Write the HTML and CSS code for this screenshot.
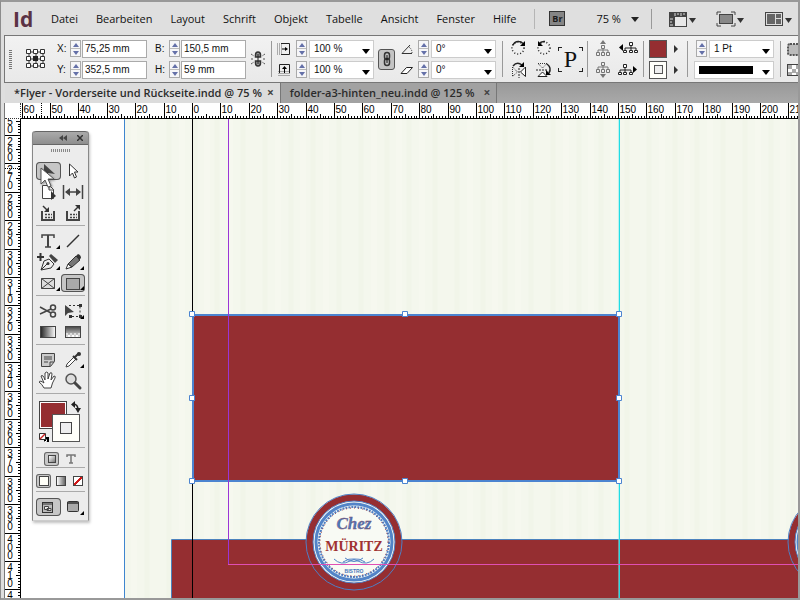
FILE: index.html
```html
<!DOCTYPE html>
<html lang="de">
<head>
<meta charset="utf-8">
<title>Flyer</title>
<link rel="stylesheet" href="styles.css">
</head>
<body>
<header class="menubar">
  <strong class="app-mark">Id</strong>
  <nav class="menus">
    <button>Datei</button><button>Bearbeiten</button><button>Layout</button><button>Schrift</button><button>Objekt</button><button>Tabelle</button><button>Ansicht</button><button>Fenster</button><button>Hilfe</button>
  </nav>
  <i class="rule"></i>
  <button class="bridge">Br</button>
  <label class="zoom"><select aria-label="Zoom"><option>75 %</option></select></label>
  <i class="rule tall"></i>
  <div class="views">
    <button aria-label="Anzeigeoptionen"><svg width="28" height="18"><rect x="1.500" y="2.500" width="17" height="14" fill="#e8e8e8" stroke="#444"/><path d="M1 2h18v5H7v10H1z" fill="#444"/><path d="M7 3v3M10 3v2M13 3v3M16 3v2M2 9h3M2 12h2M2 15h3" stroke="#ddd"/><path d="M21 8h7l-3.500 5z" fill="#333"/></svg></button>
    <button aria-label="Bildschirmmodus"><svg width="28" height="18"><rect x="3.500" y="4.500" width="13" height="9" fill="#888" stroke="#444"/><path d="M1 5V2h4M15 2h4v3M19 13v3h-4M5 16H1v-3" fill="none" stroke="#444"/><path d="M21 8h7l-3.500 5z" fill="#333"/></svg></button>
    <button aria-label="Dokumente anordnen"><svg width="28" height="18"><rect x="1.500" y="2.500" width="17" height="13" fill="#ddd" stroke="#444"/><path d="M3 4h8v10H3zM12 4h5v4h-5zM12 9h5v5h-5z" fill="#666"/><path d="M21 8h7l-3.500 5z" fill="#333"/></svg></button>
  </div>
</header>

<section class="control">
  <i class="grip"></i>
  <svg class="refpoint" width="20" height="20"><path d="M3 3h14v14H3zM3 10h14M10 3v14" fill="none" stroke="#333"/><g fill="#fff" stroke="#333"><path d="M.5.500h4v4h-4zM7.500.500h4v4h-4zM14.500.500h4v4h-4zM.5 7.500h4v4h-4zM14.500 7.500h4v4h-4zM.5 14.500h4v4h-4zM7.500 14.500h4v4h-4zM14.500 14.500h4v4h-4z"/></g><path d="M7 7h5v5H7z" fill="#222"/></svg>
  <div class="rows pos">
    <div class="row"><label for="fx">X:</label><span class="spin"><button aria-label="X erhöhen"></button><button aria-label="X verringern"></button></span><input id="fx" value="75,25 mm"></div>
    <div class="row"><label for="fy">Y:</label><span class="spin"><button aria-label="Y erhöhen"></button><button aria-label="Y verringern"></button></span><input id="fy" value="352,5 mm"></div>
  </div>
  <div class="rows size">
    <div class="row"><label for="fb">B:</label><span class="spin"><button aria-label="B erhöhen"></button><button aria-label="B verringern"></button></span><input id="fb" value="150,5 mm"></div>
    <div class="row"><label for="fh">H:</label><span class="spin"><button aria-label="H erhöhen"></button><button aria-label="H verringern"></button></span><input id="fh" value="59 mm"></div>
  </div>
  <svg class="unlinked" width="14" height="16"><path d="M4.500 6V4q0-3 2.500-3t2.500 3v2zM4.500 10v2q0 3 2.500 3t2.500-3v-2z" fill="#999" stroke="#333" stroke-width="1.500"/><path d="M7 3v10" stroke="#222"/><path d="M0 3l3 2M0 8h3M0 13l3-2M14 3l-3 2M14 8h-3M14 13l-3-2" stroke="#555" stroke-dasharray="2 1"/></svg>
  <i class="rule"></i>
  <div class="rows scale">
    <div class="row"><svg width="16" height="16"><path d="M1 3h6M1 5h6M1 7h6M1 9h6M1 11h6M1 13h6" stroke="#666" stroke-dasharray="1 1"/><path d="M5 2.500h8.500v11H5" fill="none" stroke="#222"/><path d="M6 8h4" stroke="#000"/><path d="M9 6l3 2-3 2z"/></svg><span class="spin"><button aria-label="X-Skalierung erhöhen"></button><button aria-label="X-Skalierung verringern"></button></span><span class="pick"><select aria-label="X-Skalierung"><option>100 %</option></select></span></div>
    <div class="row"><svg width="16" height="16"><path d="M3 9v6M5 9v6M7 9v6M9 9v6M11 9v6M13 9v6" stroke="#666" stroke-dasharray="1 1"/><path d="M3.500 11V2.500h10V11" fill="none" stroke="#222"/><path d="M8.500 6v5" stroke="#000"/><path d="M6 7l2.500-3L11 7z"/></svg><span class="spin"><button aria-label="Y-Skalierung erhöhen"></button><button aria-label="Y-Skalierung verringern"></button></span><span class="pick"><select aria-label="Y-Skalierung"><option>100 %</option></select></span></div>
  </div>
  <button class="chain" aria-label="Proportionen beibehalten"><svg width="10" height="16"><rect x="2.500" y="1.500" width="5" height="7" rx="2.500" fill="none" stroke="#333" stroke-width="1.500"/><rect x="2.500" y="7.500" width="5" height="7" rx="2.500" fill="none" stroke="#333" stroke-width="1.500"/><path d="M5 4v8" stroke="#111"/></svg></button>
  <div class="rows angle">
    <div class="row"><svg width="14" height="14"><path d="M10 3L2 11.500h10" fill="none" stroke="#333"/><path d="M9 5q3 2 3 6" fill="none" stroke="#333" stroke-dasharray="1 1"/></svg><span class="spin"><button aria-label="Drehwinkel erhöhen"></button><button aria-label="Drehwinkel verringern"></button></span><span class="pick"><select aria-label="Drehwinkel"><option>0°</option></select></span></div>
    <div class="row"><svg width="14" height="14"><path d="M6.500 4.500h6L7 10.500H1z" fill="#fff" stroke="#222"/></svg><span class="spin"><button aria-label="Scherwinkel erhöhen"></button><button aria-label="Scherwinkel verringern"></button></span><span class="pick"><select aria-label="Scherwinkel"><option>0°</option></select></span></div>
  </div>
  <i class="rule"></i>
  <div class="quad turn">
    <button aria-label="Um 90° drehen"><svg width="18" height="18"><circle cx="8" cy="9" r="6" fill="none" stroke="#222" stroke-width="1.500" stroke-dasharray="1 2"/><path d="M3 6q2-4 6-3.500 2 0 4 2" fill="none" stroke="#222" stroke-width="1.500"/><path d="M15 2v5h-5z"/></svg></button>
    <button aria-label="Um 90° gegen den Uhrzeigersinn drehen"><svg width="18" height="18"><circle cx="9" cy="9" r="6" fill="none" stroke="#222" stroke-width="1.500" stroke-dasharray="1 2"/><path d="M4 5q2-3 6-2.500" fill="none" stroke="#222" stroke-width="1.500"/><path d="M3 2v5h5z"/></svg></button>
    <button aria-label="Horizontal spiegeln"><svg width="18" height="18"><path d="M2.500 6v9.500l5-4.500z" fill="none" stroke="#333" stroke-dasharray="1 1"/><path d="M15.500 6v9.500l-5-4.500z" fill="#fff" stroke="#222"/><path d="M9 7v10" stroke="#222" stroke-dasharray="2 1"/><path d="M3 5q4-5 9-1" fill="none" stroke="#222" stroke-width="1.500"/><path d="M14 1v5H9z"/></svg></button>
    <button aria-label="Vertikal spiegeln"><svg width="18" height="18"><path d="M3 2.500h9L7.500 7z" fill="none" stroke="#333" stroke-dasharray="1 1"/><path d="M3 15.500h9L7.500 11z" fill="#fff" stroke="#222"/><path d="M1 9h12" stroke="#222" stroke-dasharray="2 1"/><path d="M12 3q5 4 2 9" fill="none" stroke="#222" stroke-width="1.500"/><path d="M11 9v5h5z"/></svg></button>
  </div>
  <div class="pmark">P</div>
  <i class="rule"></i>
  <div class="quad tree">
    <button aria-label="Container auswählen"><svg class="dim" width="16" height="18"><path d="M8 1l3 4H5z"/><path d="M8 8v3M3 13v-2h10v2M8 11v3" fill="none" stroke="#000"/><path d="M6.500 6.500h3v3h-3zM1.500 13.500h3v3h-3zM6.500 13.500h3v3h-3zM11.500 13.500h3v3h-3z" fill="#eee" stroke="#000"/></svg></button>
    <button aria-label="Vorheriges Objekt"><svg width="20" height="18"><path d="M5 5v7L1 8.500z"/><path d="M13 6v3M7 12V9h11v3M13 9v3" fill="none" stroke="#222"/><path d="M11.500 3.500h3v3h-3zM5.500 11.500h3v2h-3zM11.500 11.500h3v2h-3zM16.500 11.500h3v2h-3z" fill="#fff" stroke="#222"/></svg></button>
    <button aria-label="Inhalt auswählen"><svg class="dim" width="16" height="18"><path d="M8 17l3-4H5z"/><path d="M8 3v3M3 9V6h10v3M8 6v3" fill="none" stroke="#000"/><path d="M6.500 1.500h3v3h-3zM1.500 8.500h3v3h-3zM6.500 8.500h3v3h-3zM11.500 8.500h3v3h-3z" fill="#eee" stroke="#000"/></svg></button>
    <button aria-label="Nächstes Objekt"><svg width="20" height="18"><path d="M15 5v7l4-3.500z"/><path d="M7 6v3M2 12V9h11v3M7 9v3" fill="none" stroke="#222"/><path d="M5.500 3.500h3v3h-3zM.5 11.500h3v2h-3zM5.500 11.500h3v2h-3zM11.500 11.500h3v2h-3z" fill="#fff" stroke="#222"/></svg></button>
  </div>
  <i class="rule"></i>
  <div class="rows paint">
    <div class="row"><button class="chip red" aria-label="Fläche"></button><button class="more" aria-label="Flächenfarben"></button></div>
    <div class="row"><button class="chip hollow" aria-label="Kontur"></button><button class="more" aria-label="Konturfarben"></button></div>
  </div>
  <i class="rule"></i>
  <div class="rows stroke">
    <div class="row end"><span class="spin"><button aria-label="Stärke erhöhen"></button><button aria-label="Stärke verringern"></button></span><span class="pick"><select aria-label="Konturstärke"><option>1 Pt</option></select></span></div>
    <div class="row"><span class="pick wide"><select aria-label="Konturart"><option></option></select></span></div>
  </div>
  <i class="rule"></i>
  <div class="rows fx">
    <div class="row"><svg width="18" height="16"><rect x="2" y="3" width="12" height="11" rx="2" fill="#bbb" stroke="#555" stroke-width="2" stroke-dasharray="2 1"/></svg></div>
    <div class="row"><svg width="18" height="16"><rect x="1.500" y="2.500" width="14" height="11" fill="#fff" stroke="#444"/><path d="M2 3h4v4H2zM10 3h4v4h-4zM6 7h4v4H6zM2 10h4v3H2zM10 10h4v3h-4z" fill="#aaa"/></svg></div>
  </div>
</section>

<div class="tabs">
  <div class="tab active"><a href="#doc">*Flyer - Vorderseite und Rückseite.indd @ 75 %</a><button aria-label="Schließen">×</button></div>
  <div class="tab"><a href="#doc2">folder-a3-hinten_neu.indd @ 125 %</a><button aria-label="Schließen">×</button></div>
</div>

<main class="workspace">
  <div class="corner"></div>
  <svg class="ruler-x" id="rx"></svg>
  <svg class="ruler-y" id="ry"></svg>
  <div class="canvas" id="doc">
    <svg class="art" width="100%" height="100%">
      <defs>
        <pattern id="paper" width="96" height="600" patternUnits="userSpaceOnUse">
          <rect width="96" height="600" fill="#f4f7ed"/>
          <path d="M4 0v600M30 0v600M52 0v600M78 0v600" stroke="#f1f5e9" stroke-width="5"/>
          <path d="M17 0v600M65 0v600M90 0v600" stroke="#f6f8ef" stroke-width="6"/>
        </pattern>
        <g id="badge">
          <circle r="44" fill="#952e31" stroke="#952e31" stroke-width="7"/>
          <circle r="48" fill="none" stroke="#4f7fc4"/>
          <circle r="41" fill="#f8faf4" stroke="#4f7fc4"/>
          <circle r="38" fill="none" stroke="#5284c8" stroke-width="3"/>
          <circle r="35" fill="none" stroke="#4f7fc4" stroke-width="2" stroke-dasharray="2 1"/>
          <circle r="34" fill="none" stroke="#952e31" stroke-width="1" stroke-dasharray="1 3"/>
          <text class="script" y="-13">Chez</text>
          <text class="brand" y="9">MÜRITZ</text>
          <path d="M-20 17q7 7 16 2 4-3 8 0 9 5 16-2M-11 20q6-4 11-3 5-1 11 3M-9 16q9 7 18 0" fill="none" stroke="#5284c8"/>
          <text class="small" y="31">BISTRO</text>
        </g>
      </defs>
      <rect x="103" width="100%" height="100%" fill="url(#paper)"/>
      <path d="M103.500 0v2000" stroke="#3f86cf"/>
      <rect x="151" y="420" width="100%" height="100%" fill="#952e31"/>
      <path d="M150.500 2000V420.500H3000" fill="none" stroke="#4c82bd"/>
      <use href="#badge" x="333" y="423"/>
      <use href="#badge" x="815" y="423"/>
      <path d="M171.500 0v2000" stroke="#000"/>
      <path d="M597.500 0v2000" stroke="#7feef0" stroke-opacity=".5"/>
      <path d="M598.500 0v2000" stroke="#22dce4"/>
      <rect x="172" y="196" width="426" height="166" fill="#952e31" stroke="#4c84d0" stroke-width="2"/>
      <path d="M207.500 0v445" stroke="#9a35d6"/>
      <path d="M207 445.500h3000" stroke="#e04fb4"/>
      <g fill="#fff" stroke="#4c84d0"><path d="M168.500 192.500h5v5h-5zM381.500 192.500h5v5h-5zM595.500 192.500h5v5h-5zM168.500 276.500h5v5h-5zM595.500 276.500h5v5h-5zM168.500 359.500h5v5h-5zM381.500 359.500h5v5h-5zM595.500 359.500h5v5h-5z"/></g>
    </svg>

    <aside class="tools">
      <div class="tools-head"><svg width="8" height="6"><path d="M4 0v6L0 3zM8 0v6L4 3z" fill="#444"/></svg><svg width="6" height="6"><path d="M0 0l6 6M6 0L0 6" stroke="#333" stroke-width="1.500"/></svg></div>
      <i class="dots"></i>
      <div class="set">
        <button class="on" aria-label="Auswahl"><svg width="24" height="20"><path d="M8 2v12l4-3 7 1z" fill="#444"/></svg></button>
        <button aria-label="Direktauswahl"><svg width="24" height="20"><path d="M8.500 3v12l3-3 2 5 2-1-2-5h3.500z" fill="#fff" stroke="#333"/></svg></button>
        <button aria-label="Seite"><svg width="24" height="20"><path d="M6.500 3.500h7l4 4v9h-11z" fill="#fff" stroke="#444"/><path d="M13 3v5h5" fill="none" stroke="#444"/><path d="M15 9v9l5-4z" fill="#333"/></svg></button>
        <button aria-label="Lücke"><svg width="24" height="20"><path d="M2.500 3v14M21.500 3v14" stroke="#444" stroke-width="1.500"/><path d="M6 10h12" stroke="#444" stroke-width="1.500"/><path d="M9 6l-5 4 5 4zM15 6l5 4-5 4z" fill="#444"/></svg></button>
        <button aria-label="Inhaltsaufnahme"><svg width="24" height="20"><path d="M7 9H6v8h12V9h-1" fill="none" stroke="#444" stroke-width="2"/><path d="M9 11.500h7M9 14.500h7" stroke="#444" stroke-width="1.500" stroke-dasharray="2 1"/><path d="M7 3l4 4" stroke="#333" stroke-width="1.500"/><path d="M13 4v5H8z" fill="#333"/></svg></button>
        <button aria-label="Inhaltsplatzierung"><svg width="24" height="20"><path d="M7 9H6v8h12V9h-1" fill="none" stroke="#444" stroke-width="2"/><path d="M9 11.500h7M9 14.500h7" stroke="#444" stroke-width="1.500" stroke-dasharray="2 1"/><path d="M13 8l4-4" stroke="#333" stroke-width="1.500"/><path d="M14 2h5v5z" fill="#333"/></svg></button>
      </div>
      <div class="set">
        <button class="fly" aria-label="Text"><svg width="24" height="20"><path d="M6 7V4h12v3M9 16h6" fill="none" stroke="#444" stroke-width="1.500"/><path d="M12 4v12" stroke="#444" stroke-width="2"/></svg></button>
        <button aria-label="Linie"><svg width="24" height="20"><path d="M6 16L18 4" stroke="#333" stroke-width="1.500"/></svg></button>
        <button class="fly" aria-label="Zeichenstift"><svg width="24" height="20"><path d="M1 5h7M4.500 1v8" stroke="#333" stroke-width="2"/><path d="M5 18l3-9 5-2 5 5-3 4z" fill="#eee" stroke="#333"/><path d="M5 18l6-6" stroke="#333"/><circle cx="12" cy="11.500" r="1.500" fill="#333"/><path d="M13 4l2-2 7 6-3 3z" fill="#444"/></svg></button>
        <button class="fly" aria-label="Buntstift"><svg width="24" height="20"><path d="M5 17l2-5 4 3z" fill="#fff" stroke="#333"/><path d="M7 12l8-8 4 4-8 7z" fill="#777" stroke="#333"/><path d="M15 4l2-2q3 1 3 4l-2 2z" fill="#333"/></svg></button>
        <button class="fly" aria-label="Rechteckrahmen"><svg width="24" height="20"><path d="M5.500 5.500h13v10h-13zl13 10M18.500 5.500l-13 10" fill="#ddd" stroke="#444"/></svg></button>
        <button class="on fly" aria-label="Rechteck"><svg width="24" height="20"><rect x="5.500" y="4.500" width="13" height="11" fill="#aaa" stroke="#444"/></svg></button>
      </div>
      <div class="set">
        <button aria-label="Schere"><svg width="24" height="20"><path d="M4 6l11 6M4 13l11-5" stroke="#444" stroke-width="1.500"/><circle cx="17" cy="6.500" r="2.500" fill="none" stroke="#444" stroke-width="1.500"/><circle cx="17" cy="13.500" r="2.500" fill="none" stroke="#444" stroke-width="1.500"/></svg></button>
        <button class="fly" aria-label="Frei transformieren"><svg width="24" height="20"><path d="M8 4.500h11v11H8" fill="none" stroke="#333" stroke-dasharray="2 2"/><path d="M18 3h3v3h-3zM18 14h3v3h-3zM8 14h3v3H8z" fill="#333"/><path d="M4 4v11l3-3 6-1z" fill="#444"/></svg></button>
        <button aria-label="Verlaufsfarbfeld"><svg width="24" height="20"><defs><linearGradient id="g1"><stop stop-color="#222"/><stop offset="1" stop-color="#fff"/></linearGradient><linearGradient id="g2" x2="0" y2="1"><stop stop-color="#444"/><stop offset=".5" stop-color="#999"/><stop offset="1" stop-color="#eee"/></linearGradient></defs><rect x="4.500" y="4.500" width="15" height="11" fill="url(#g1)" stroke="#444"/></svg></button>
        <button aria-label="Weiche Verlaufskante"><svg width="24" height="20"><rect x="4.500" y="4.500" width="15" height="11" fill="url(#g2)" stroke="#444"/><path d="M5 12h14" stroke="#ddd" stroke-width="2" stroke-dasharray="2 2"/><path d="M7 14h12" stroke="#fff" stroke-width="2" stroke-dasharray="2 2"/></svg></button>
      </div>
      <div class="set">
        <button aria-label="Notiz"><svg width="24" height="20"><path d="M5.500 3.500h13v8l-4 5h-9z" fill="#ccc" stroke="#444"/><path d="M8 7h8M8 9h8M8 12h4M18 12h-4v4" fill="none" stroke="#444"/></svg></button>
        <button class="fly" aria-label="Pipette"><svg width="24" height="20"><path d="M5 17l1-3 7-7 2 2-7 7z" fill="#fff" stroke="#444"/><path d="M12 6l4 4M14 7l4-4" stroke="#333" stroke-width="2"/><circle cx="18" cy="4" r="2" fill="#333"/></svg></button>
        <button aria-label="Hand"><svg width="24" height="20"><path d="M8 17q-2-4-5-6 1-2 5 1L5 5q2-2 4 4V2q2-2 3 0v6l2-6q2-1 2 1l-1 6 3-4q2 0 1 2-3 5-4 10z" fill="#fff" stroke="#444"/></svg></button>
        <button aria-label="Zoom"><svg width="24" height="20"><circle cx="10" cy="8" r="5" fill="#ddd" stroke="#555" stroke-width="1.500"/><path d="M14 12l5 5" stroke="#444" stroke-width="3" stroke-linecap="round"/></svg></button>
      </div>
      <div class="colors">
        <svg width="50" height="47"><rect x="3.500" y="3.500" width="27" height="27" fill="#fff" stroke="#444"/><rect x="5" y="5" width="24" height="24" fill="#952e31"/><rect x="16.500" y="16.500" width="27" height="27" fill="#fffffa" stroke="#555"/><rect x="24.500" y="24.500" width="11" height="11" fill="#eee" stroke="#444"/><path d="M37 6q5 0 5 6" fill="none" stroke="#222" stroke-width="1.500"/><path d="M39 3v7l-4-3.500zM39 10h6l-3 5z" fill="#222"/><path d="M8 39h5v5H8z"/><path d="M3.500 35.500h6v6h-6z" fill="#fff" stroke="#333"/><path d="M4 41l5-5" stroke="#c22" stroke-width="1.500"/><path d="M10.500 41.500v2h-2" fill="none" stroke="#fff"/></svg>
      </div>
      <div class="strip r1"><button class="mini on" aria-label="Formatierung auf Container"><i class="sw grey"></i></button><button class="mini t" aria-label="Formatierung auf Text"><svg width="10" height="10"><path d="M1 3V1h8v2M5 1v8M3 9h4" fill="none" stroke="#777" stroke-width="1.500"/></svg></button></div>
      <div class="strip r2"><button class="mini on" aria-label="Farbe"><i class="sw"></i></button><button class="mini" aria-label="Verlauf"><i class="sw grad"></i></button><button class="mini" aria-label="Ohne"><i class="sw none"></i></button></div>
      <div class="set last">
        <button class="on" aria-label="Normal"><svg width="24" height="20"><rect x="6.500" y="4.500" width="10" height="10" fill="#bbb" stroke="#333"/><path d="M6 6h11" stroke="#333"/><path d="M8.500 8.500h4v3h-4zM11 10.500h4v2h-4z" fill="#eee" stroke="#444"/></svg></button>
        <button class="fly" aria-label="Vorschau"><svg width="24" height="20"><rect x="6.500" y="4.500" width="11" height="10" rx="1" fill="#aaa" stroke="#333"/><path d="M6 6h12" stroke="#333" stroke-width="1.500"/></svg></button>
      </div>
    </aside>
    <svg class="pointer" width="16" height="22"><path d="M1 1v16l4-4 3 7 3-1-3-7h6z" fill="#fff" stroke="#555"/></svg>
  </div>
</main>
<script src="script.js"></script>
</body>
</html>
```
FILE: styles.css
```css
* { box-sizing: border-box; }
html, body { height: 100%; }
body {
  margin: 0;
  display: flex;
  flex-direction: column;
  border: 1px solid #8c8c8c;
  border-top: 2px solid #999;
  border-right: 2px solid #999;
  border-bottom: 2px solid #999;
  padding-left: 3px;
  background: #dedede;
  font-family: "Liberation Sans", sans-serif;
  font-size: 10px;
  color: #111;
  overflow: hidden;
}
button, input, select { font: inherit; color: inherit; margin: 0; padding: 0; border: 0; border-radius: 0; background: none; }
select { appearance: none; outline: 0; }
svg { display: block; flex: none; }
i { display: block; }

.menubar { display: flex; align-items: center; flex: none; height: 33px; background: #dfdfdf; }
.menubar > * { flex: none; }
.app-mark { width: 40px; padding-left: 9px; font: bold 21px/30px "Open Sans", sans-serif; color: #5b3245; }
.menus { display: flex; gap: 18px; padding-left: 7px; font: 11px/30px "Open Sans", sans-serif; }
.menubar .rule { margin: 0 14px 0 18px; height: 20px; width: 1px; background: #b5b5b5; }
.menubar .rule.tall { margin: 0 16px 0 11px; background: #999; }
.bridge { width: 16px; height: 15px; border: 1px solid #333; background: #858585; color: #1c1c1c; font: bold 9px/12px "Open Sans", sans-serif; }
.zoom { position: relative; margin-left: 31px; font: 11px/30px "Open Sans", sans-serif; }
.zoom select { width: 44px; height: 30px; }
.zoom::after, .pick::after { content: ""; position: absolute; right: 1px; top: 13px; border: 4px solid transparent; border-top: 5px solid #222; border-bottom: 0; }
.views { display: flex; gap: 20px; }

.control {
  display: flex;
  align-items: center;
  flex: none;
  height: 48px;
  border: 1px solid #777;
  border-right: 0;
  background: linear-gradient(#f2f2f2, #e9e9e9);
  overflow: hidden;
}
.control > * { flex: none; }
.control .rule { width: 1px; height: 36px; background: #999; }
.grip { width: 3px; height: 19px; margin-left: 4px; background: repeating-linear-gradient(#777 0 1px, transparent 1px 2px); }
.refpoint { margin-left: 14px; }
.rows { display: flex; flex-direction: column; gap: 3px; }
.row { display: flex; align-items: center; height: 18px; }
.row.end { justify-content: flex-end; }
.row label { width: 13px; }
.size .row label { width: 14px; }
.spin { display: flex; flex-direction: column; width: 11px; height: 17px; border: 1px solid #aaa; background: #f6f6f8; }
.spin button { flex: 1; display: flex; align-items: center; justify-content: center; border-bottom: 1px solid #bbb; }
.spin button + button { border-bottom: 0; }
.spin button::before { content: ""; border: 3px solid transparent; border-top: 0; border-bottom: 4px solid #6470a8; }
.spin button + button::before { border-bottom: 0; border-top: 4px solid #6470a8; }
.row input { width: 65px; height: 18px; margin-left: 1px; padding-left: 2px; border: 1px solid #aaa; background: #fff; }
.pos { margin-left: 11px; }
.size { margin-left: 8px; }
.unlinked { margin: 0 6px 0 5px; }
.scale { margin-left: 4px; }
.scale .spin, .angle .spin { margin-left: 4px; }
.pick { position: relative; display: block; width: 65px; height: 18px; margin-left: 2px; border: 1px solid #ccc; background: #fff; }
.pick select { width: 100%; height: 16px; padding-left: 4px; }
.pick::after { right: 3px; top: 8px; border-top-color: #000; pointer-events: none; }
.pick.wide { width: 80px; margin-left: 0; }
.pick.wide::before { content: ""; position: absolute; left: 4px; top: 4px; width: 54px; height: 8px; background: #000; }
.chain { display: grid; place-items: center; width: 17px; height: 21px; margin-left: 4px; border: 1px solid #555; border-radius: 3px; background: #c4c4c4; }
.angle { margin: 0 6px 0 5px; }
.quad { display: grid; grid-template-columns: auto auto; row-gap: 4px; }
.turn { margin-left: 7px; column-gap: 7px; }
.pmark {
  width: 25px;
  height: 25px;
  margin: 0 4px 0 5px;
  font: 24px/24px "Liberation Serif", serif;
  text-align: center;
  color: #111;
  --c: #222;
  background:
    linear-gradient(var(--c), var(--c)) 0 0 / 4px 1px, linear-gradient(var(--c), var(--c)) 0 0 / 1px 4px,
    linear-gradient(var(--c), var(--c)) 100% 0 / 4px 1px, linear-gradient(var(--c), var(--c)) 100% 0 / 1px 4px,
    linear-gradient(var(--c), var(--c)) 0 100% / 4px 1px, linear-gradient(var(--c), var(--c)) 0 100% / 1px 4px,
    linear-gradient(var(--c), var(--c)) 100% 100% / 4px 1px, linear-gradient(var(--c), var(--c)) 100% 100% / 1px 4px;
  background-repeat: no-repeat;
}
.tree { margin: 0 5px 0 7px; column-gap: 7px; }
.dim { opacity: .5; }
.paint { margin: 0 9px 0 5px; }
.chip { width: 18px; height: 18px; border: 1px solid #555; }
.chip.red { background: #952e31; }
.chip.hollow { display: grid; place-items: center; background: #fffffa; }
.chip.hollow::before { content: ""; width: 7px; height: 7px; border: 1px solid #555; background: #eee; }
.more { width: 11px; height: 18px; display: grid; place-items: center end; }
.more::before { content: ""; border: 4px solid transparent; border-left: 4px solid #333; border-right: 0; }
.stroke { margin: 0 6px; }
.fx { margin-left: 5px; }

.tabs { display: flex; flex: none; height: 20px; margin-left: 1px; background: linear-gradient(#999, #a9a9a9); }
.tab { display: flex; align-items: center; gap: 9px; padding: 0 6px 0 9px; border-right: 1px solid #777; background: #a2a2a2; font: 600 11px/20px "Open Sans", sans-serif; }
.tab.active { gap: 5px; background: #dcdcdc; }
.tab a { color: #2b2b2b; text-decoration: none; white-space: nowrap; }
.tab button { font: bold 12px/18px "Open Sans", sans-serif; color: #444; }

.workspace { flex: 1; min-height: 0; display: grid; grid-template: 16px minmax(0, 1fr) / 16px minmax(0, 1fr); border-left: 1px solid #777; background: #fff; }
.corner { border: 1px dotted #333; border-top: 0; border-left: 0; }
.ruler-x, .ruler-y { width: 100%; height: 100%; overflow: hidden; background: #fff; }
.ruler-x text, .ruler-y text { font: 10px "Liberation Sans", sans-serif; fill: #000; }
.ruler-y text { text-anchor: middle; }
.ruler-x path, .ruler-y path { stroke: #000; fill: none; }
.ruler-x .cursor, .ruler-y .cursor { stroke-dasharray: 1 1; }
.canvas { position: relative; overflow: hidden; background: #fff; }
.art { position: absolute; inset: 0; }
.art text { text-anchor: middle; }
.script { font: italic bold 17px "Liberation Serif", serif; fill: #4d78ba; stroke: #7d4560; stroke-width: .3px; }
.brand { font: bold 14px "Liberation Serif", serif; fill: #a03232; }
.small { font: bold 5px "Liberation Sans", sans-serif; fill: #4878bb; }

.tools { position: absolute; left: 11px; top: 12px; width: 57px; padding-bottom: 3px; border: 1px solid #888; border-top: 0; border-bottom-color: #ccc; border-radius: 3px 3px 0 0; background: #ececec; box-shadow: 1px 2px 3px rgba(0, 0, 0, .25); }
.tools-head { display: flex; align-items: center; justify-content: flex-end; gap: 10px; height: 14px; padding-right: 5px; border: solid #666; border-width: 1px 0; border-radius: 3px 3px 0 0; background: linear-gradient(#aaa, #8e8e8e); }
.dots { width: 20px; height: 3px; margin: 4px auto 8px; background: repeating-linear-gradient(90deg, #888 0 1px, transparent 1px 2px); }
.set, .colors, .strip { margin: 0 3px; padding-bottom: 2px; border-bottom: 1px solid #aaa; margin-bottom: 4px; }
.set { display: grid; grid-template-columns: 1fr 1fr; }
.set.last { border: 0; padding: 0; margin-bottom: 0; }
.set button { position: relative; height: 21px; display: grid; place-items: center; border-radius: 4px; overflow: hidden; }
.set button.on { background: #c6c6c6; box-shadow: inset 0 0 0 1px #555; height: 18px; align-self: center; }
.fly::after { content: ""; position: absolute; right: 1px; bottom: 2px; border: 2px solid #000; border-top-color: transparent; border-left-color: transparent; }
.colors { height: 50px; overflow: hidden; }
.strip { display: flex; align-items: center; }
.r1 { height: 16px; gap: 4px; padding-left: 8px; }
.r2 { height: 20px; gap: 2px; }
.mini { display: grid; place-items: center; width: 15px; height: 14px; border-radius: 3px; }
.mini.on { background: #c8c8c8; box-shadow: inset 0 0 0 1px #666; }
.sw { width: 10px; height: 10px; border: 1px solid #444; background: #fffff8; }
.sw.grey { width: 8px; height: 8px; background: linear-gradient(135deg, #fff, #777); }
.sw.grad { background: linear-gradient(90deg, #fff, #666); }
.sw.none { background: linear-gradient(to bottom right, #fff 42%, #d01818 42% 58%, #fff 58%); }
.pointer { position: absolute; left: 19px; top: 48px; filter: drop-shadow(1px 1px 1px rgba(0, 0, 0, .4)); }
```
FILE: script.js
```
// Rulers: one numbered division is 10 mm, drawn at 75 % zoom.
const MM = 2.84;

function build(svg, origin, first, last, vertical) {
  const extent = vertical ? svg.clientHeight : svg.clientWidth;
  let ticks = "";
  let labels = "";
  for (let v = first; v <= last; v++) {
    const p = Math.round(origin + v * MM) + 0.5;
    if (p > extent) break;
    const len = v % 10 === 0 ? 16 : v % 5 === 0 ? 5 : 3;
    ticks += vertical ? `M16 ${p}h${-len}` : `M${p} 16v${-len}`;
    if (v % 10 !== 0) continue;
    if (vertical) {
      const digits = String(v).split("").map((d, i) => `<tspan x="5" y="${p + 9 + i * 8}">${d}</tspan>`);
      labels += `<text>${digits.join("")}</text>`;
    } else {
      labels += `<text x="${p + 1}" y="10">${Math.abs(v)}</text>`;
    }
  }
  const edge = vertical ? "M15.500 0V3000" : "M0 15.500H5000";
  const cursor = vertical ? "M0 49.500H16" : "M20.500 0V16";
  svg.innerHTML = `<path d="${ticks}${edge}"/><path class="cursor" d="${cursor}"/>${labels}`;
}

function draw() {
  build(document.getElementById("rx"), 171, -60, 2000, false);
  build(document.getElementById("ry"), 16 - 260 * MM, 250, 2000, true);
}

draw();
window.addEventListener("resize", draw);
```
